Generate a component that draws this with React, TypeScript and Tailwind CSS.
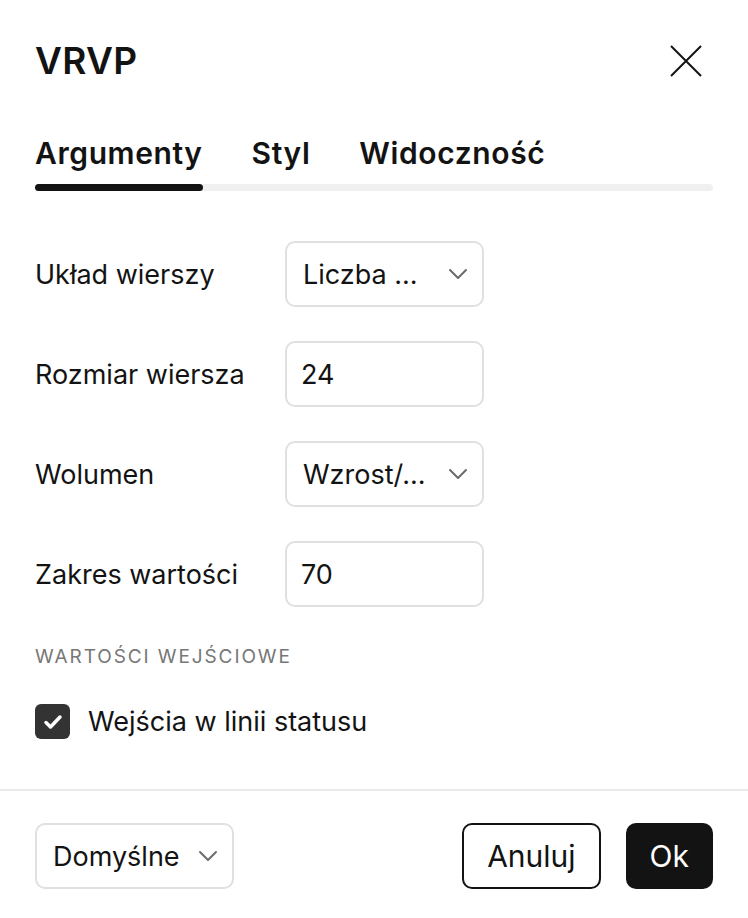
import React from "react";

function Chevron() {
  return (
    <svg width="20" height="12" viewBox="0 0 20 12" fill="none">
      <path d="M2 2l8 8 8-8" stroke="#6b6b6b" strokeWidth="2" strokeLinecap="round" strokeLinejoin="round" />
    </svg>
  );
}

function SelectBox({ value }: { value: string }) {
  return (
    <div className="flex h-[66px] w-[199px] items-center justify-between rounded-[10px] border-2 border-[#e0e0e0] pl-[16px] pr-[14px]">
      <span className="text-[27px] leading-[33px] text-[#131313]">{value}</span>
      <Chevron />
    </div>
  );
}

function InputBox({ value }: { value: string }) {
  return (
    <div className="flex h-[66px] w-[199px] items-center rounded-[10px] border-2 border-[#e0e0e0] pl-[14px]">
      <span className="text-[27px] leading-[33px] text-[#131313]">{value}</span>
    </div>
  );
}

function Row({ label, children }: { label: string; children: React.ReactNode }) {
  return (
    <div className="flex items-center">
      <div className="w-[250px] text-[27px] leading-[33px] text-[#131313]">{label}</div>
      {children}
    </div>
  );
}

export default function App() {
  return (
    <div className="flex h-[918px] w-[748px] flex-col bg-white font-['Inter',sans-serif] text-[#131313]">
      <div className="px-[35px]">
        <div className="flex items-center justify-between pt-[38px]">
          <h1 className="text-[37px] leading-[46px] font-semibold tracking-[0.3px]">VRVP</h1>
          <svg width="34" height="34" viewBox="0 0 34 34" className="mr-[10px]">
            <path d="M2 2l30 30M32 2L2 32" stroke="#131313" strokeWidth="2" />
          </svg>
        </div>
        <div className="mt-[51px] flex gap-[49px] text-[30px] leading-[36px] font-semibold tracking-[0.6px]">
          <span>Argumenty</span>
          <span>Styl</span>
          <span>Widoczność</span>
        </div>
        <div className="mt-[13px] h-[7px] rounded-full bg-[#f0f0f0]">
          <div className="h-full w-[168px] rounded-full bg-[#131313]" />
        </div>
        <div className="mt-[50px] flex flex-col gap-[34px]">
          <Row label="Układ wierszy"><SelectBox value="Liczba ..." /></Row>
          <Row label="Rozmiar wiersza"><InputBox value="24" /></Row>
          <Row label="Wolumen"><SelectBox value="Wzrost/..." /></Row>
          <Row label="Zakres wartości"><InputBox value="70" /></Row>
        </div>
        <div className="mt-[38px] text-[19px] leading-[24px] tracking-[1.9px] text-[#777]">WARTOŚCI WEJŚCIOWE</div>
        <div className="mt-[35px] flex items-center gap-[18px]">
          <div className="flex h-[35px] w-[35px] items-center justify-center rounded-[6px] bg-[#333]">
            <svg width="22" height="22" viewBox="0 0 22 22" fill="none">
              <path d="M4 11.5l4.5 4.5 9.5-10" stroke="white" strokeWidth="3.5" strokeLinecap="round" strokeLinejoin="round" />
            </svg>
          </div>
          <span className="text-[27px] leading-[33px]">Wejścia w linii statusu</span>
        </div>
      </div>
      <div className="mt-[50px] h-[2px] bg-[#ebebeb]" />
      <div className="flex items-center justify-between px-[35px] pt-[32px]">
        <SelectBox value="Domyślne" />
        <div className="flex gap-[25px]">
          <button className="h-[66px] rounded-[10px] border-2 border-[#131313] px-[23px] text-[30px]">Anuluj</button>
          <button className="h-[66px] rounded-[10px] bg-[#131313] px-[24px] text-[30px] text-white">Ok</button>
        </div>
      </div>
    </div>
  );
}
